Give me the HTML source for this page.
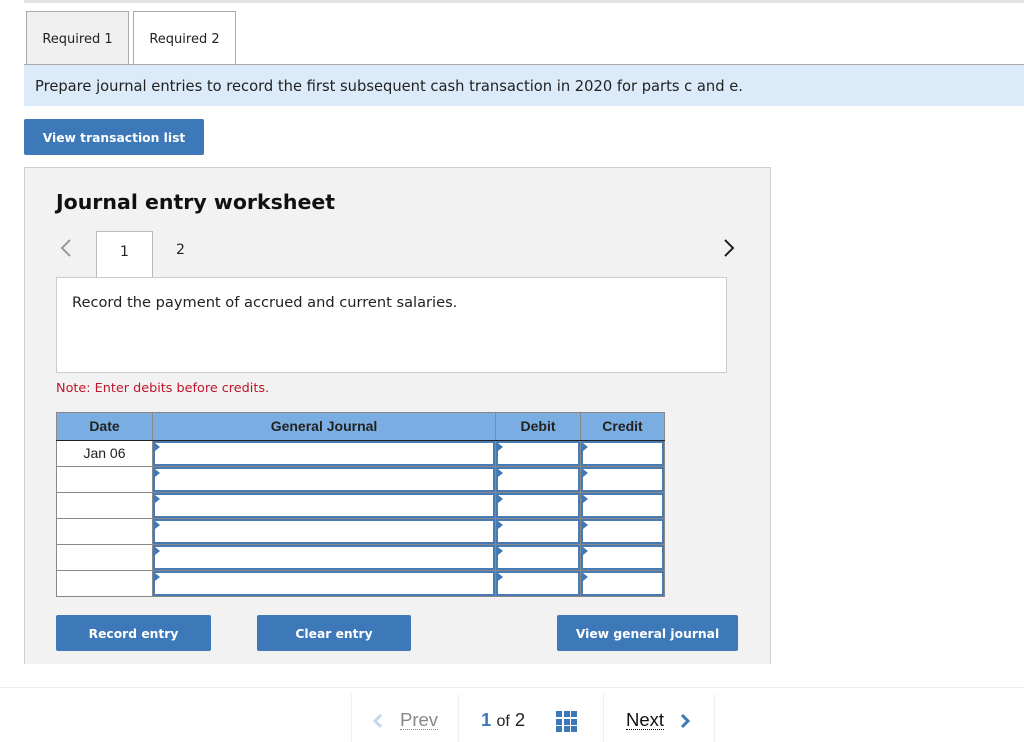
<!DOCTYPE html>
<html><head><style>
body{margin:0;width:1024px;height:742px;background:#fff;font-family:"DejaVu Sans","Liberation Sans",sans-serif;position:relative;overflow:hidden;color:#222}
.a{position:absolute}
.tab{position:absolute;top:11px;height:53px;width:103px;border:1px solid #aaa;border-bottom:none;box-sizing:border-box;font-size:13px;text-align:center;line-height:56px}
.btn{position:absolute;background:#3d78b8;color:#fff;font-weight:bold;font-size:12.3px;text-align:center;border-radius:2px;font-family:"DejaVu Sans",sans-serif}
.cell{position:absolute;box-sizing:border-box;background:#fff}
.inp{border:2px solid #4a7ab3}
.tri{position:absolute;left:0;top:0;width:0;height:0;border-top:4px solid transparent;border-bottom:4px solid transparent;border-left:5px solid #3d78b8}
.ft{font-family:"Liberation Sans",Arial,sans-serif}
</style></head><body>
<div class="a" style="left:24px;top:0;width:1000px;height:3px;background:#e3e3e3"></div>
<div class="tab" style="left:26px;background:#f0f0f0">Required 1</div>
<div class="tab" style="left:133px;background:#fff">Required 2</div>
<div class="a" style="left:24px;top:64px;width:1000px;height:1px;background:#aaa"></div>
<div class="a" style="left:24px;top:65px;width:1000px;height:41px;background:#dcebf9;font-size:14.7px;line-height:43px;text-indent:11px">Prepare journal entries to record the first subsequent cash transaction in 2020 for parts c and e.</div>
<div class="btn" style="left:24px;top:119px;width:180px;height:36px;line-height:38px">View transaction list</div>

<div class="a" style="left:24px;top:167px;width:747px;height:497px;background:#f2f2f2;border:1px solid #d0d0d0;border-bottom:none;box-sizing:border-box"></div>
<div class="a" style="left:56px;top:190px;font-size:20.5px;font-weight:bold;color:#111">Journal entry worksheet</div>
<svg class="a" style="left:60px;top:239px" width="12" height="18"><path d="M10 1 L2 9 L10 17" fill="none" stroke="#999" stroke-width="2"/></svg>
<svg class="a" style="left:723px;top:239px" width="12" height="18"><path d="M2 1 L10 9 L2 17" fill="none" stroke="#222" stroke-width="2"/></svg>
<div class="a" style="left:96px;top:231px;width:57px;height:47px;background:#fff;border:1px solid #bbb;border-bottom:none;box-sizing:border-box;text-align:center;font-size:14px;line-height:40px">1</div>
<div class="a" style="left:176px;top:242px;font-size:14px">2</div>
<div class="a" style="left:56px;top:277px;width:671px;height:96px;background:#fff;border:1px solid #ccc;box-sizing:border-box;font-size:14.6px;padding:16px 0 0 15px">Record the payment of accrued and current salaries.</div>
<div class="a" style="left:56px;top:381px;font-size:12.8px;color:#c0142a">Note: Enter debits before credits.</div>

<div class="a ft" style="left:56px;top:412px;width:609px;height:185px;background:#888"></div>
<div class="a ft" style="left:57px;top:413px;width:95px;height:27px;background:#7aaee2;font-weight:bold;font-size:14px;text-align:center;line-height:27px">Date</div>
<div class="a ft" style="left:153px;top:413px;width:342px;height:27px;background:#7aaee2;font-weight:bold;font-size:14px;text-align:center;line-height:27px">General Journal</div>
<div class="a ft" style="left:496px;top:413px;width:84px;height:27px;background:#7aaee2;font-weight:bold;font-size:14px;text-align:center;line-height:27px">Debit</div>
<div class="a ft" style="left:581px;top:413px;width:83px;height:27px;background:#7aaee2;font-weight:bold;font-size:14px;text-align:center;line-height:27px">Credit</div>
<div class="a" style="left:56px;top:440px;width:609px;height:1px;background:#222"></div>

<div id="rows"></div>
<script>
var h='';
for(var i=0;i<6;i++){var y=441+i*26;
h+='<div class="cell ft" style="left:57px;top:'+y+'px;width:95px;height:25px;text-align:center;font-size:14px;line-height:25px">'+(i==0?'Jan 06':'')+'</div>';
h+='<div class="cell inp" style="left:153px;top:'+y+'px;width:342px;height:25px;background:#fff"><div class="tri"></div></div>';
h+='<div class="cell inp" style="left:496px;top:'+y+'px;width:84px;height:25px"><div class="tri"></div></div>';
h+='<div class="cell inp" style="left:581px;top:'+y+'px;width:83px;height:25px"><div class="tri"></div></div>';}
document.getElementById('rows').innerHTML=h;
</script>

<div class="btn" style="left:56px;top:615px;width:155px;height:36px;line-height:38px">Record entry</div>
<div class="btn" style="left:257px;top:615px;width:154px;height:36px;line-height:38px">Clear entry</div>
<div class="btn" style="left:557px;top:615px;width:181px;height:36px;line-height:38px">View general journal</div>

<div class="a" style="left:0;top:687px;width:1024px;height:1px;background:#eee"></div>
<div class="a" style="left:351px;top:694px;width:1px;height:48px;background:#eee"></div>
<div class="a" style="left:458px;top:694px;width:1px;height:48px;background:#eee"></div>
<div class="a" style="left:603px;top:694px;width:1px;height:48px;background:#eee"></div>
<div class="a" style="left:714px;top:694px;width:1px;height:48px;background:#eee"></div>
<svg class="a" style="left:373px;top:713px" width="10" height="16"><path d="M8 2 L2 8 L8 14" fill="none" stroke="#c5d7ec" stroke-width="3"/></svg>
<div class="a ft" style="left:400px;top:710px;font-size:18.5px;color:#888;border-bottom:1px dotted #888;line-height:19px">Prev</div>
<div class="a ft" style="left:481px;top:710px;font-size:18.5px;line-height:19px"><b style="color:#3d78b8">1</b> <span style="font-size:16px">of</span> 2</div>
<div class="a" style="left:556px;top:711px;width:21px;height:21px;display:grid;grid-template-columns:repeat(3,6px);grid-template-rows:repeat(3,6px);gap:1.5px">
<i style="background:#3d78b8"></i><i style="background:#3d78b8"></i><i style="background:#3d78b8"></i><i style="background:#3d78b8"></i><i style="background:#3d78b8"></i><i style="background:#3d78b8"></i><i style="background:#3d78b8"></i><i style="background:#3d78b8"></i><i style="background:#3d78b8"></i></div>
<div class="a ft" style="left:626px;top:710px;font-size:18.5px;color:#111;border-bottom:1px dotted #111;line-height:19px">Next</div>
<svg class="a" style="left:680px;top:713px" width="10" height="16"><path d="M2 2 L8 8 L2 14" fill="none" stroke="#3d78b8" stroke-width="3"/></svg>
</body></html>
